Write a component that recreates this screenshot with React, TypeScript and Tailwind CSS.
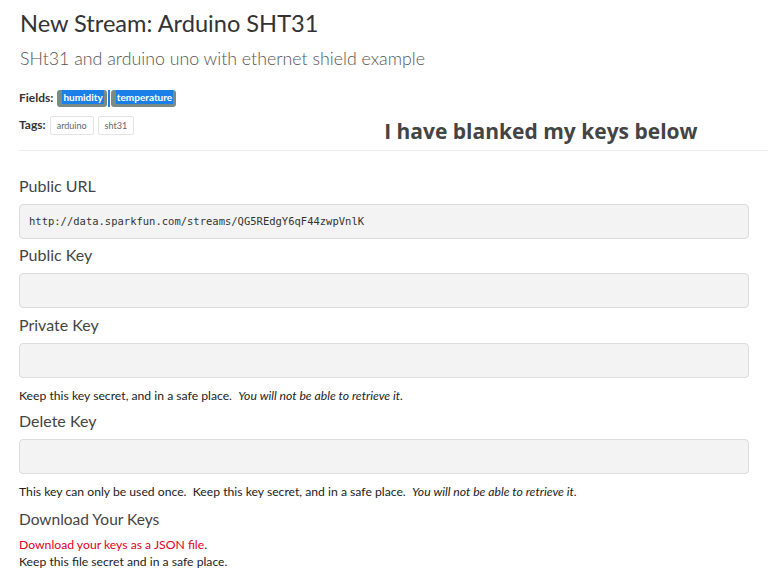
const fontStack = { fontFamily: 'Lato, "Noto Sans", sans-serif' };

function KeyField({ label, value }: { label: string; value?: string }) {
  return (
    <div>
      <div className="text-[16px] text-[#444] leading-[20px] pt-[10px] pb-[8px]">{label}</div>
      <div className="h-[35px] bg-[#f3f3f3] border border-[#dcdcdc] rounded-[4px] flex items-center px-[9px]">
        {value && (
          <span className="text-[10.5px] text-[#333]" style={{ fontFamily: '"DejaVu Sans Mono", monospace' }}>
            {value}
          </span>
        )}
      </div>
    </div>
  );
}

export default function App() {
  return (
    <div className="w-[768px] h-[579px] bg-white overflow-hidden text-[#222]" style={fontStack}>
      <div className="pl-[19px] pt-[8px]">
        <h1 className="text-[23.6px] leading-[30px] text-[#333] pl-[1px]">New Stream: Arduino SHT31</h1>
        <p className="text-[17.8px] leading-[24px] text-[#555] font-light mt-[8px] pl-[1px]">
          SHt31 and arduino uno with ethernet shield example
        </p>

        <div className="flex items-center gap-[4px] mt-[19px] h-[18px]">
          <span className="text-[12px] font-bold text-[#333]">Fields:</span>
          <div className="flex items-center">
            <span className="bg-[#7a8b86] rounded-[3px] h-[17px] pl-[5px] pr-[3px] flex items-start">
              <span className="bg-[#1b7fe9] text-white text-[10px] font-bold leading-[14px] px-[1px]">humidity</span>
            </span>
            <span className="w-[2px] h-[17px] bg-[#1b7fe9] mx-[1px]"></span>
            <span className="bg-[#7a8b86] rounded-[3px] h-[17px] pl-[5px] pr-[3px] flex items-start">
              <span className="bg-[#1b7fe9] text-white text-[10px] font-bold leading-[14px] px-[1px]">temperature</span>
            </span>
          </div>
        </div>

        <div className="flex items-start mt-[9px]">
          <div className="flex items-center gap-[4px]">
            <span className="text-[12px] font-bold text-[#333] -mt-[2px]">Tags:</span>
            <span className="border border-[#e4e4e4] rounded-[2px] text-[9px] text-[#666] px-[6px] h-[19px] flex items-center">arduino</span>
            <span className="border border-[#e4e4e4] rounded-[2px] text-[9px] text-[#666] px-[6px] h-[19px] flex items-center">sht31</span>
          </div>
          <div
            className="ml-[250px] text-[21px] font-bold text-[#444] leading-[28px] mt-[1px]"
            style={{ fontFamily: '"Open Sans", "Noto Sans", sans-serif' }}
          >
            I have blanked my keys below
          </div>
        </div>

        <div className="border-t border-[#eeeeee] mt-[5px]"></div>

        <div className="w-[730px] mt-[15px]">
          <KeyField label="Public URL" value="http://data.sparkfun.com/streams/QG5REdgY6qF44zwpVnlK" />
          <div className="-mt-[4px]">
            <KeyField label="Public Key" />
          </div>
          <div className="-mt-[3px]">
            <KeyField label="Private Key" />
          </div>
          <p className="text-[12.2px] text-[#222] mt-[10px] leading-[16px]">
            Keep this key secret, and in a safe place.&nbsp; <em>You will not be able to retrieve it.</em>
          </p>
          <div className="-mt-[3px]">
            <KeyField label="Delete Key" />
          </div>
          <p className="text-[12.2px] text-[#222] mt-[10px] leading-[16px]">
            This key can only be used once.&nbsp; Keep this key secret, and in a safe place.&nbsp;{' '}
            <em>You will not be able to retrieve it.</em>
          </p>
          <div className="text-[15.5px] text-[#444] mt-[9px] leading-[20px]">Download Your Keys</div>
          <p className="text-[12.2px] leading-[17px] mt-[7px]">
            <a className="text-[#e3001b]">Download your keys as a JSON file</a>.
          </p>
          <p className="text-[12.2px] leading-[17px] text-[#222]">Keep this file secret and in a safe place.</p>
        </div>
      </div>
    </div>
  );
}
